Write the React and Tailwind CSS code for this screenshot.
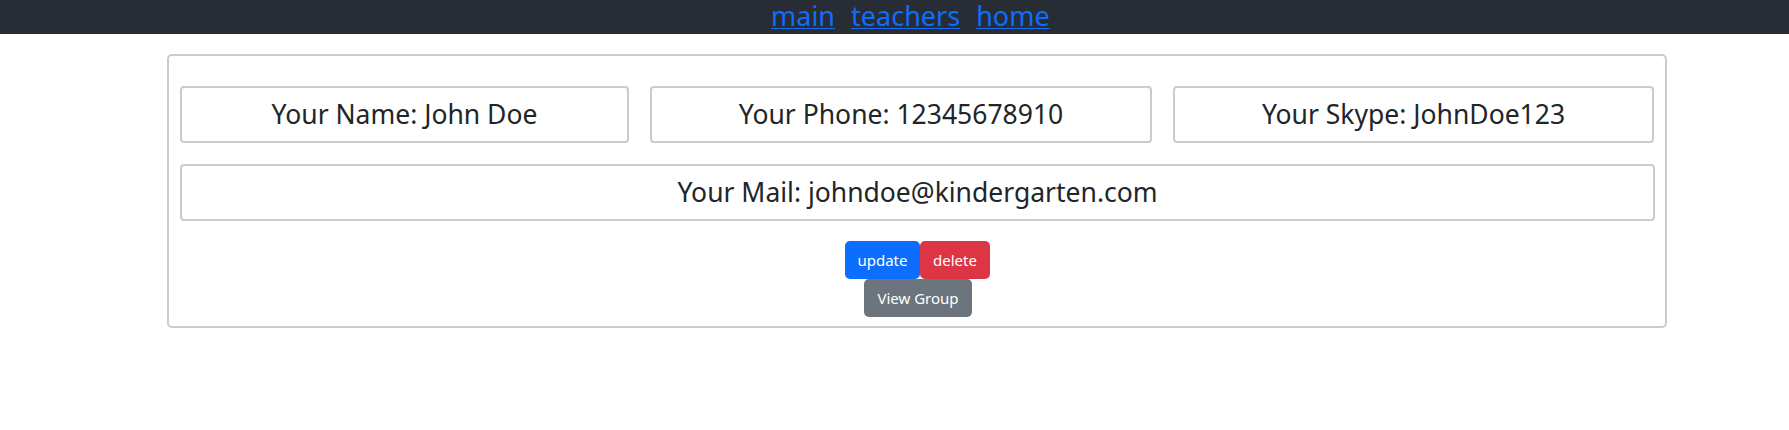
export default function App() {
  const font = { fontFamily: '"Noto Sans", "Open Sans", sans-serif' };
  return (
    <div className="w-[1789px] h-[430px] bg-white text-[#212529]" style={font}>
      <nav className="h-[34px] bg-[#282c34] flex items-start pl-[771px] gap-[16px] text-[27px] leading-[31px]">
        <a href="#" className="text-[#0d6efd] underline decoration-1 underline-offset-[2px]">main</a>
        <a href="#" className="text-[#0d6efd] underline decoration-1 underline-offset-[2px]">teachers</a>
        <a href="#" className="text-[#0d6efd] underline decoration-1 underline-offset-[2px]">home</a>
      </nav>
      <div className="ml-[167px] mt-[20px] w-[1500px] h-[274px] border-2 border-[#cbcbcb] rounded-[5px] pt-[30px] pl-[11px]">
        <div className="flex items-start gap-[21px]">
          <div className="w-[449px] h-[57px] border-2 border-[#cbcbcb] rounded-[4px] flex items-center justify-center text-[26.5px]">Your Name: John Doe</div>
          <div className="w-[502px] h-[57px] border-2 border-[#cbcbcb] rounded-[4px] flex items-center justify-center text-[26.5px]">Your Phone: 12345678910</div>
          <div className="w-[481px] h-[57px] border-2 border-[#cbcbcb] rounded-[4px] flex items-center justify-center text-[26.5px]">Your Skype: JohnDoe123</div>
        </div>
        <div className="mt-[21px] w-[1475px] h-[57px] border-2 border-[#cbcbcb] rounded-[4px] flex items-center justify-center text-[26.5px]">Your Mail: johndoe@kindergarten.com</div>
        <div className="mt-[20px] flex pl-[665px]">
          <button className="w-[75px] h-[38px] bg-[#0d6efd] text-white text-[15px] rounded-[5px]">update</button>
          <button className="w-[70px] h-[38px] bg-[#dc3545] text-white text-[15px] rounded-[5px]">delete</button>
        </div>
        <div className="flex pl-[684px]">
          <button className="w-[108px] h-[38px] bg-[#6c757d] text-white text-[15px] rounded-[5px]">View Group</button>
        </div>
      </div>
    </div>
  );
}
